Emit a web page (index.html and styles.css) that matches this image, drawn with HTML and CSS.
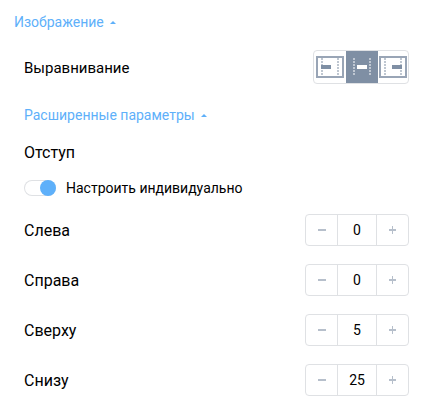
FILE: index.html
```html
<!DOCTYPE html>
<html lang="ru">
<head>
  <meta charset="UTF-8" />
  <meta name="viewport" content="width=device-width, initial-scale=1.0"/>
  <title>Изображение</title>
  <link rel="stylesheet" href="styles.css">
</head>
<body>
  <section class="panel">
    <button type="button" class="toggle-link" aria-expanded="true">Изображение
      <svg class="caret" width="6" height="3" viewBox="0 0 6 3" aria-hidden="true"><path d="M0 3L3 0l3 3z"/></svg>
    </button>

    <div class="panel-body">
      <div class="row row-align">
        <span class="label">Выравнивание</span>
        <div class="align-group" role="group" aria-label="Выравнивание">
          <button type="button" class="align-button" aria-label="Слева">
            <svg width="28" height="22" viewBox="0 0 28 22" aria-hidden="true">
              <rect class="frame" x="1" y="1" width="26" height="20"/>
              <path class="guides" d="M6 2v18M22 2v18"/>
              <path class="bar" d="M5 9h10v4H5z"/>
            </svg>
          </button>
          <button type="button" class="align-button active" aria-label="По центру" aria-pressed="true">
            <svg width="28" height="22" viewBox="0 0 28 22" aria-hidden="true">
              <path class="guides" d="M6 2v18M22 2v18"/>
              <path class="bar" d="M9 9h10v4H9z"/>
            </svg>
          </button>
          <button type="button" class="align-button" aria-label="Справа">
            <svg width="28" height="22" viewBox="0 0 28 22" aria-hidden="true">
              <rect class="frame" x="1" y="1" width="26" height="20"/>
              <path class="guides" d="M6 2v18M22 2v18"/>
              <path class="bar" d="M13 9h10v4H13z"/>
            </svg>
          </button>
        </div>
      </div>

      <button type="button" class="toggle-link" aria-expanded="true">Расширенные параметры
        <svg class="caret" width="6" height="3" viewBox="0 0 6 3" aria-hidden="true"><path d="M0 3L3 0l3 3z"/></svg>
      </button>

      <h2 class="heading">Отступ</h2>

      <label class="switch-row">
        <input type="checkbox" class="switch" checked>
        Настроить индивидуально
      </label>

      <div class="fields">
        <div class="row">
          <label class="label-large" for="left">Слева</label>
          <div class="stepper">
            <button type="button" class="minus" aria-label="Уменьшить"></button>
            <input type="text" id="left" inputmode="numeric" value="0">
            <button type="button" class="plus" aria-label="Увеличить"></button>
          </div>
        </div>
        <div class="row">
          <label class="label-large" for="right">Справа</label>
          <div class="stepper">
            <button type="button" class="minus" aria-label="Уменьшить"></button>
            <input type="text" id="right" inputmode="numeric" value="0">
            <button type="button" class="plus" aria-label="Увеличить"></button>
          </div>
        </div>
        <div class="row">
          <label class="label-large" for="top">Сверху</label>
          <div class="stepper">
            <button type="button" class="minus" aria-label="Уменьшить"></button>
            <input type="text" id="top" inputmode="numeric" value="5">
            <button type="button" class="plus" aria-label="Увеличить"></button>
          </div>
        </div>
        <div class="row">
          <label class="label-large" for="bottom">Снизу</label>
          <div class="stepper">
            <button type="button" class="minus" aria-label="Уменьшить"></button>
            <input type="text" id="bottom" inputmode="numeric" value="25">
            <button type="button" class="plus" aria-label="Увеличить"></button>
          </div>
        </div>
      </div>
    </div>
  </section>

  <script>
    document.querySelectorAll('.stepper').forEach((stepper) => {
      const input = stepper.querySelector('input');
      const change = (delta) => {
        input.value = Math.max(0, (parseInt(input.value) || 0) + delta);
      };
      stepper.querySelector('.minus').addEventListener('click', () => change(-1));
      stepper.querySelector('.plus').addEventListener('click', () => change(1));
    });
  </script>
</body>
</html>
```
FILE: styles.css
```css
* {
  box-sizing: border-box;
}

body {
  margin: 0;
  background-color: #fff;
  color: #000;
  font-family: Roboto, "Noto Sans", sans-serif;
  font-size: 15px;
}

button,
input {
  margin: 0;
  padding: 0;
  font-family: inherit;
}

button {
  border: none;
  background: none;
  cursor: pointer;
}

.panel {
  padding: 12px 23px 8px 14px;
}

.panel-body {
  padding-left: 10px;
}

.toggle-link {
  display: flex;
  align-items: center;
  gap: 6px;
  color: #5eb0fa;
  font-size: 14px;
  line-height: 20px;
}

.caret {
  fill: #5eb0fa;
}

.row {
  display: flex;
  align-items: center;
  justify-content: space-between;
}

.row-align {
  padding: 18px 0 21px;
}

.label {
  line-height: 20px;
  padding-top: 2px;
}

.label-large {
  font-size: 16px;
  line-height: 20px;
  padding-top: 2px;
}

.align-group {
  display: flex;
  height: 34px;
  border: 1px solid #dfe1e4;
  border-radius: 4px;
  overflow: hidden;
}

.align-button {
  display: flex;
  align-items: center;
  justify-content: center;
  width: 32px;
  color: #7f8fa4;
}

.align-button.active {
  background-color: #7f8fa4;
  color: #fff;
}

.align-button:last-child {
  width: 30px;
}

.frame {
  fill: none;
  stroke: currentColor;
  stroke-width: 2;
  opacity: 0.8;
}

.guides {
  fill: none;
  stroke: currentColor;
  stroke-width: 2;
  stroke-dasharray: 2 1;
  opacity: 0.5;
}

.bar {
  fill: currentColor;
}

.heading {
  margin: 18px 0 16px;
  font-size: 16px;
  font-weight: 400;
  line-height: 20px;
}

.switch-row {
  display: flex;
  align-items: center;
  gap: 10px;
  font-size: 14px;
  line-height: 18px;
  cursor: pointer;
}

.switch {
  display: flex;
  width: 32px;
  height: 16px;
  border-radius: 8px;
  box-shadow: inset 0 0 0 1px #dfe1e4;
  appearance: none;
  cursor: pointer;
}

.switch::before {
  content: "";
  width: 16px;
  height: 16px;
  border-radius: 50%;
  background-color: #c2cad5;
}

.switch:checked {
  justify-content: flex-end;
}

.switch:checked::before {
  background-color: #5eb0fa;
}

.fields {
  display: grid;
  gap: 18px;
  margin-top: 17px;
}

.stepper {
  display: flex;
  width: 104px;
  height: 32px;
  border: 1px solid #dfe1e4;
  border-radius: 4px;
}

.stepper button {
  width: 31px;
  background: linear-gradient(#b6bfcb, #b6bfcb) center / 8px 2px no-repeat;
}

.stepper .plus {
  background:
    linear-gradient(#b6bfcb, #b6bfcb) center / 7px 2px no-repeat,
    linear-gradient(#b6bfcb, #b6bfcb) center / 1px 8px no-repeat;
}

.stepper input {
  flex: 1;
  min-width: 0;
  border: solid #dfe1e4;
  border-width: 0 1px;
  background: none;
  color: #000;
  font-size: 14px;
  text-align: center;
}
```
